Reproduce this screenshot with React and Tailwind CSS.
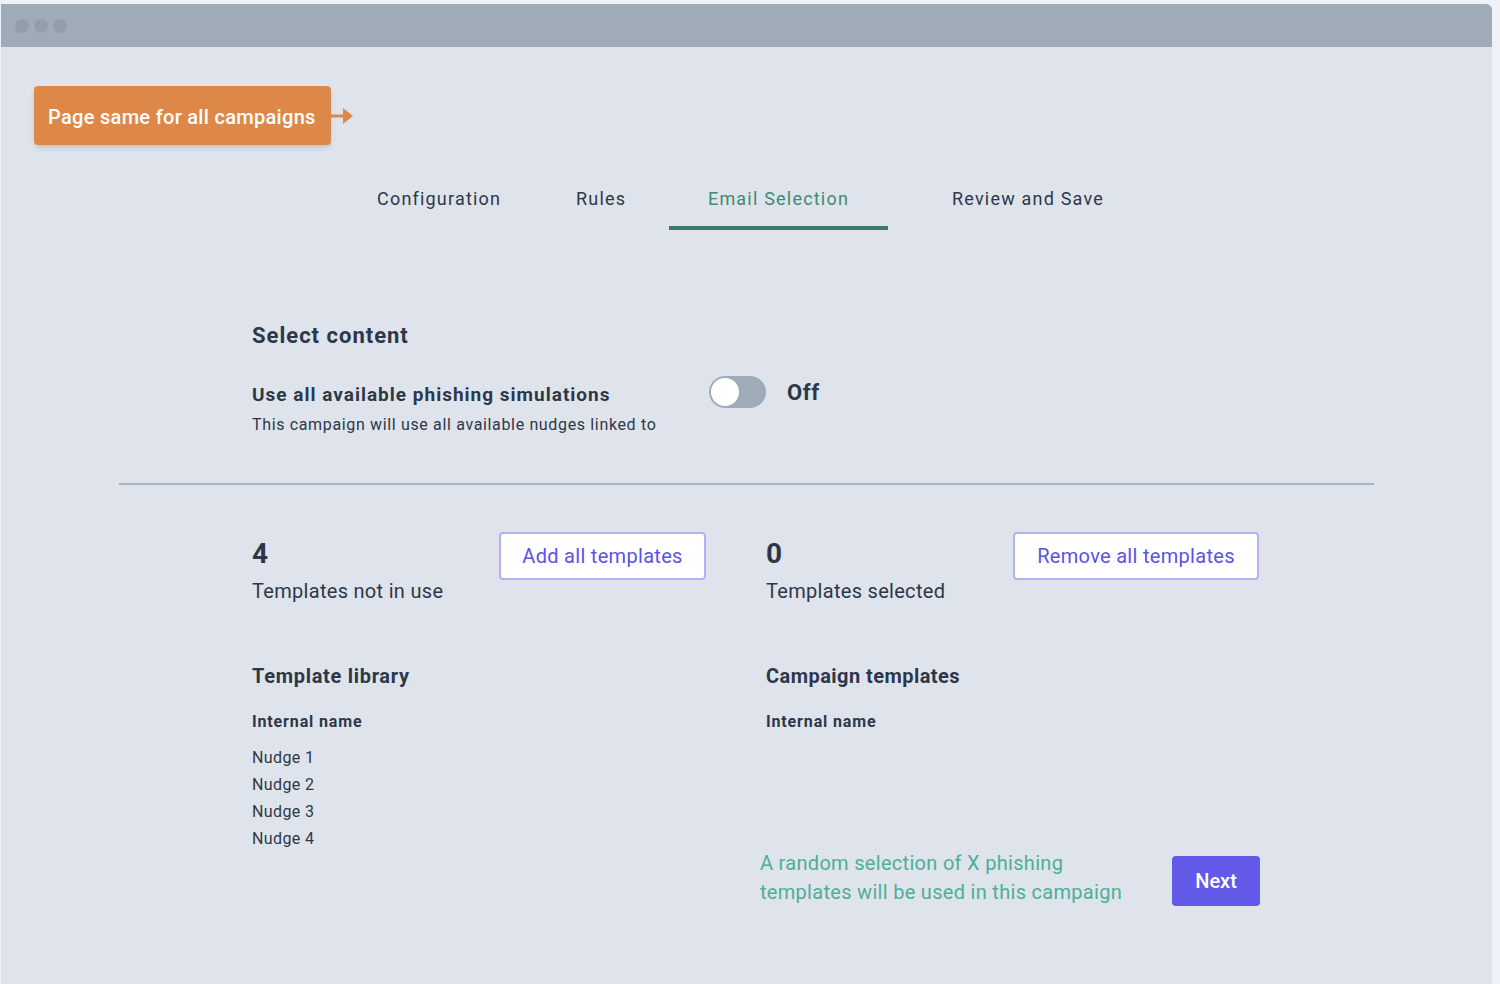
import React from "react";

const nudges = ["Nudge 1", "Nudge 2", "Nudge 3", "Nudge 4"];

function Tabs() {
  return (
    <div className="flex pl-[376px] mt-[42px] text-[18px] leading-[24px] tracking-[1.2px]">
      <div className="w-[199px] pb-[15px] text-[#2d3748]">Configuration</div>
      <div className="w-[93px] pb-[15px] text-[#2d3748]">Rules</div>
      <div className="w-[219px] text-center pb-[15px] text-[#3f8a70] border-b-4 border-[#3e7a68]">
        Email Selection
      </div>
      <div className="ml-[64px] pb-[15px] text-[#2d3748]">Review and Save</div>
    </div>
  );
}

function OutlineButton({ children, width }) {
  return (
    <button
      className={`${width} h-[48px] bg-white border-2 border-[#b6b0f2] rounded text-[20px] text-[#5b52e8] tracking-[0.3px]`}
    >
      {children}
    </button>
  );
}

export default function App() {
  return (
    <div
      className="w-[1500px] h-[984px] bg-[#eef2f6] pt-1 pl-px overflow-hidden"
      style={{ fontFamily: "Roboto, 'Noto Sans', sans-serif" }}
    >
      <div className="w-[1491px] h-[980px] bg-[#dfe4ec] rounded-tr-md flex flex-col">
        {/* title bar */}
        <div className="h-[43px] bg-[#a0abb9] rounded-tr-md flex items-center gap-[5px] pl-[14px]">
          <span className="w-[14px] h-[14px] rounded-full bg-[#939eac]" />
          <span className="w-[14px] h-[14px] rounded-full bg-[#939eac]" />
          <span className="w-[14px] h-[14px] rounded-full bg-[#939eac]" />
        </div>

        {/* callout */}
        <div className="flex items-center mt-[39px] ml-[33px]">
          <div className="w-[297px] h-[59px] bg-[#dd8849] rounded-sm shadow-md flex items-center pl-[14px] pt-[2px] text-white text-[20px] font-medium tracking-[0.3px]">
            Page same for all campaigns
          </div>
          <svg width="24" height="18" viewBox="0 0 24 18" className="-ml-px">
            <path d="M0 9 H14" stroke="#dd8849" strokeWidth="3" />
            <path d="M13 1 L23 9 L13 17 Z" fill="#dd8849" />
          </svg>
        </div>

        <Tabs />

        {/* select content */}
        <div className="pl-[251px] mt-[92px] text-[#2d3748]">
          <h2 className="text-[22px] leading-[28px] font-bold tracking-[1px]">Select content</h2>
          <div className="flex mt-[26px]">
            <div className="w-[457px]">
              <div className="text-[19px] leading-[24px] font-bold mt-[7px] tracking-[1px]">
                Use all available phishing simulations
              </div>
              <div className="text-[16px] leading-[22px] mt-[7px] tracking-[0.65px]">
                This campaign will use all available nudges linked to
              </div>
            </div>
            <div className="flex items-center h-[32px]">
              <div className="w-[57px] h-[32px] rounded-full bg-[#a0abb9] flex items-center pl-[2px]">
                <span className="w-[28px] h-[28px] rounded-full bg-white" />
              </div>
              <span className="ml-[21px] text-[22px] font-bold tracking-[0.6px]">Off</span>
            </div>
          </div>
        </div>

        <div className="ml-[118px] w-[1255px] h-[2px] bg-[#aab2bf] mt-[47px]" />

        {/* templates */}
        <div className="pl-[251px] mt-[47px] grid grid-cols-[514px_494px] text-[#2d3748]">
          <div>
            <div className="flex items-start">
              <div className="w-[247px]">
                <div className="text-[28px] leading-[34px] font-bold mt-[5px]">4</div>
                <div className="text-[20px] leading-[26px] mt-[7px] tracking-[0.3px]">Templates not in use</div>
              </div>
              <OutlineButton width="w-[207px]">Add all templates</OutlineButton>
            </div>
            <div className="mt-[59px] text-[20px] leading-[26px] font-bold tracking-[0.7px]">Template library</div>
            <div className="mt-[23px] text-[16px] leading-[20px] font-bold tracking-[0.85px]">Internal name</div>
            <ul className="mt-[12px] text-[16px] leading-[27px] tracking-[0.4px]">
              {nudges.map((n) => (
                <li key={n}>{n}</li>
              ))}
            </ul>
          </div>
          <div>
            <div className="flex items-start">
              <div className="w-[247px]">
                <div className="text-[28px] leading-[34px] font-bold mt-[5px]">0</div>
                <div className="text-[20px] leading-[26px] mt-[7px] tracking-[0.3px]">Templates selected</div>
              </div>
              <OutlineButton width="w-[246px]">Remove all templates</OutlineButton>
            </div>
            <div className="mt-[59px] text-[20px] leading-[26px] font-bold tracking-[0.45px]">Campaign templates</div>
            <div className="mt-[23px] text-[16px] leading-[20px] font-bold tracking-[0.85px]">Internal name</div>
            <div className="flex items-start justify-between mt-[117px] -ml-[6px]">
              <p className="text-[20px] leading-[29px] text-[#4caf97] w-[390px] tracking-[0.3px]">
                A random selection of X phishing templates will be used in this campaign
              </p>
              <button className="mt-[7px] w-[88px] h-[50px] bg-[#6259e8] rounded text-white text-[20px] font-medium">
                Next
              </button>
            </div>
          </div>
        </div>
      </div>
    </div>
  );
}
